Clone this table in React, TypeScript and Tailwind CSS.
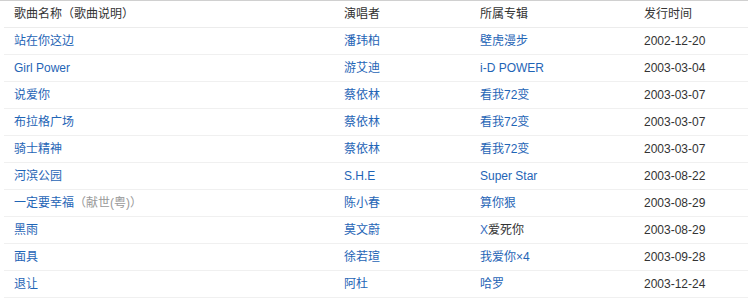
const songs = [
  { name: '站在你这边', singer: '潘玮柏', album: '壁虎漫步', date: '2002-12-20' },
  { name: 'Girl Power', singer: '游艾迪', album: 'i-D POWER', date: '2003-03-04' },
  { name: '说爱你', singer: '蔡依林', album: '看我72变', date: '2003-03-07' },
  { name: '布拉格广场', singer: '蔡依林', album: '看我72变', date: '2003-03-07' },
  { name: '骑士精神', singer: '蔡依林', album: '看我72变', date: '2003-03-07' },
  { name: '河滨公园', singer: 'S.H.E', album: 'Super Star', date: '2003-08-22' },
  { name: '一定要幸福', note: '（献世(粤)）', singer: '陈小春', album: '算你狠', date: '2003-08-29' },
  { name: '黑雨', singer: '莫文蔚', album: 'X爱死你', date: '2003-08-29', plainAlbum: true },
  { name: '面具', singer: '徐若瑄', album: '我爱你×4', date: '2003-09-28' },
  { name: '退让', singer: '阿杜', album: '哈罗', date: '2003-12-24' },
];

const font = { fontFamily: '"Liberation Sans", Arial, "Noto Sans CJK SC", sans-serif' };

export default function App() {
  return (
    <div className="w-[748px] h-[298px] bg-white overflow-hidden text-[12px] leading-none" style={font}>
      <div className="border-t border-[#d0d0d0]" />
      <div className="pl-1">
        <div className="grid grid-cols-[330px_136px_164px_1fr] h-[27px] items-center border-b border-[#ececec] text-[#333]">
          <div className="pl-[10px]">歌曲名称（歌曲说明）</div>
          <div className="pl-[10px]">演唱者</div>
          <div className="pl-[10px]">所属专辑</div>
          <div className="pl-[10px]">发行时间</div>
        </div>
        {songs.map((s, i) => (
          <div
            key={i}
            className="grid grid-cols-[330px_136px_164px_1fr] h-[27px] items-center border-b border-[#f0f0f0]"
          >
            <div className="pl-[10px] text-[#1f65b6]">
              {s.name}
              {s.note && <span className="text-[#999]">{s.note}</span>}
            </div>
            <div className="pl-[10px] text-[#1f65b6]">{s.singer}</div>
            <div className="pl-[10px] text-[#1f65b6]">
              {s.plainAlbum ? (
                <>
                  <span className="text-[#3a6fc0]">X</span>
                  <span className="text-[#333]">爱死你</span>
                </>
              ) : (
                s.album
              )}
            </div>
            <div className="pl-[10px] text-[#333]">{s.date}</div>
          </div>
        ))}
      </div>
    </div>
  );
}
